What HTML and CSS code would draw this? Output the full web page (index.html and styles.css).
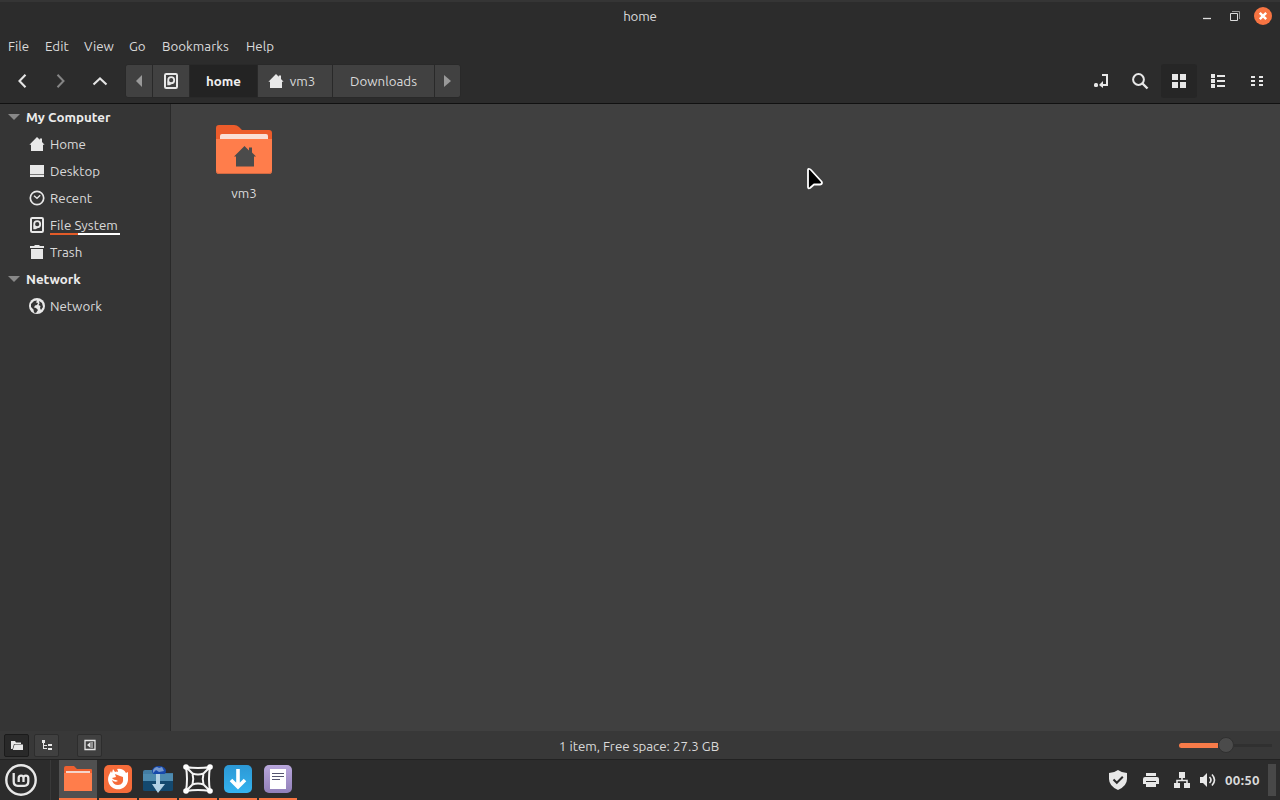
FILE: index.html
```html
<!DOCTYPE html>
<html lang="en">
<head>
<meta charset="utf-8">
<title>home</title>
<link rel="stylesheet" href="styles.css">
</head>
<body>
<svg class="defs" aria-hidden="true">
  <symbol id="house" viewBox="0 0 16 16"><path d="M8 1 L.4 8.7 H2 V15 H14 V8.700 H15.600 L13 6 V2.500 H10.800 V3.800Z"/></symbol>
  <symbol id="disk" viewBox="0 0 16 16"><rect x="2" y="1" width="12" height="14" rx="1.200" fill="none" stroke="currentColor" stroke-width="2"/><circle cx="8.200" cy="7.200" r="3" fill="none" stroke="currentColor" stroke-width="1.800"/><path d="M4.300 8l2.200 2.500 2.500.5-2.500 1.300H4.300Z"/></symbol>
</svg>
<div class="desktop">
  <header class="titlebar">
    <span class="title">home</span>
    <div class="window-buttons">
      <svg width="10" height="16"><path d="M1 10.500H9" stroke="#ddd" stroke-width="1.300"/></svg>
      <svg class="restore" width="12" height="12"><path d="M1.500 3.500h7v7h-7Z" fill="none" stroke="#ddd"/><path d="M3 1.500h7.500v7.500" fill="none" stroke="#999"/></svg>
      <svg width="18" height="18"><circle cx="9" cy="9" r="9" fill="#f77442"/><path d="M5.800 5.800l6.400 6.400m0-6.400L5.800 12.200" stroke="#fff" stroke-width="2.400"/></svg>
    </div>
  </header>
  <nav class="menubar">
    <span class="m-file">File</span><span class="m-edit">Edit</span><span class="m-view">View</span><span class="m-go">Go</span><span class="m-book">Bookmarks</span><span>Help</span>
  </nav>
  <div class="toolbar">
    <div class="nav-buttons">
      <svg width="16" height="16"><path d="M11.500 1.800L5.500 8l6 6.200" fill="none" stroke="#e5e5e5" stroke-width="2.100"/></svg>
      <svg width="16" height="16"><path d="M4.500 1.800L10.500 8l-6 6.200" fill="none" stroke="#858585" stroke-width="2"/></svg>
      <svg width="16" height="16"><path d="M1.500 11.500L8 5.500l6.500 6" fill="none" stroke="#e5e5e5" stroke-width="2.100"/></svg>
    </div>
    <div class="path">
      <span class="crumb c-prev"><svg width="6" height="12"><path d="M6 0v12L0 6Z" fill="#999"/></svg></span>
      <span class="crumb c-disk"><svg class="ico" width="16" height="16"><use href="#disk"/></svg></span>
      <span class="crumb current c-home">home</span>
      <span class="crumb c-vm"><svg class="ico" width="16" height="16"><use href="#house"/></svg><span>vm3</span></span>
      <span class="crumb c-down">Downloads</span>
      <span class="crumb c-next"><svg width="7" height="12"><path d="M0 0v12L7 6Z" fill="#999"/></svg></span>
    </div>
    <div class="view-buttons">
      <span><svg class="ico" width="16" height="16"><rect x="1" y="10" width="4" height="4" rx="1.500"/><path d="M9 2h5v10H8" fill="none" stroke="currentColor" stroke-width="2"/><path d="M10 8v7L6 12Z"/></svg></span>
      <span><svg class="ico" width="18" height="18"><circle cx="7.500" cy="7.500" r="5.400" fill="none" stroke="currentColor" stroke-width="2"/><path d="M11.500 11.500l5 5" stroke="currentColor" stroke-width="2.400"/></svg></span>
      <span class="selected"><svg class="ico" width="14" height="14"><path d="M0 0h6v6H0ZM8 0h6v6H8ZM0 8h6v6H0ZM8 8h6v6H8Z"/></svg></span>
      <span><svg class="ico" width="14" height="14"><path d="M0 0h4v4H0ZM0 5h4v4H0ZM0 10h4v4H0ZM6 1h8v2H6ZM6 6h8v2H6ZM6 11h8v2H6Z"/></svg></span>
      <span><svg class="ico" width="12" height="12"><path d="M0 1h4v2H0ZM8 1h4v2H8ZM0 5h4v2H0ZM8 5h4v2H8ZM0 9h4v2H0ZM8 9h4v2H8Z"/></svg></span>
    </div>
  </div>
  <div class="content">
    <aside class="sidebar">
      <div class="group"><i class="expander"></i><span>My Computer</span></div>
      <div class="place"><svg class="ico" width="16" height="16"><use href="#house"/></svg><span>Home</span></div>
      <div class="place"><svg class="ico" width="16" height="16"><path d="M1 2h14v9H1ZM1 12h14v2H1Z"/><path d="M1 11.500h14" stroke="#777"/></svg><span>Desktop</span></div>
      <div class="place"><svg class="ico" width="16" height="16"><circle cx="8" cy="8" r="6.700" fill="none" stroke="currentColor" stroke-width="1.700"/><path d="M5 5.800l3 2.500 3.200-3" fill="none" stroke="currentColor" stroke-width="1.400"/></svg><span>Recent</span></div>
      <div class="place"><svg class="ico" width="16" height="16"><use href="#disk"/></svg><span class="disk-name">File System<i class="usage"></i></span></div>
      <div class="place"><svg class="ico" width="16" height="16"><path d="M1 2h4l1-1h4l1 1h4v2H1ZM2 5h12v10H2Z"/></svg><span>Trash</span></div>
      <div class="group"><i class="expander"></i><span>Network</span></div>
      <div class="place"><svg class="ico" width="16" height="16"><circle cx="8" cy="8" r="8"/><path fill="#353535" d="M2 6l3-3 3-.5-1 2 2 .5-1 2-2 .5-1 2 2 .5 2 2-2 3-2-.5-.5-3L2 9ZM10 3l3 2 1 4-2 3-1-2 .5-2-2-1 1-1.500Z"/></svg><span>Network</span></div>
    </aside>
    <main class="files">
      <div class="file">
        <svg width="56" height="50"><path d="M0 4Q0 1 3 1H18Q21 1 23 3L26 6H53Q56 6 56 9V25H0Z" fill="#ed5c2b"/><path d="M4 14V12Q4 10 6 10H50Q52 10 52 12V16H4Z" fill="#faded5"/><path d="M0 15H56V47Q56 50 53 50H3Q0 50 0 47Z" fill="#ff7d4b"/><path d="M0 48Q1 50 3 50H53Q55 50 56 48V47Q55 49 53 49H3Q1 49 0 47Z" fill="#d36942"/><path d="M28.500 22L18 32.500h2v10h18v-10h2l-4-4v-5h-3v3Z" fill="#4b4b4b"/></svg>
        <span>vm3</span>
      </div>
      <svg class="pointer" width="20" height="24"><path d="M3.500 2Q2 1.500 2 3V20Q2 22 4 21L8 17.500H14Q17 17 15.500 14.500L5 3Q4.300 2.200 3.500 2Z" fill="#000" stroke="#fff" stroke-width="1.800" stroke-linejoin="round"/></svg>
    </main>
  </div>
  <footer class="statusbar">
    <div class="pane-buttons">
      <span class="pressed"><svg class="ico" width="12" height="12"><path d="M0 2h4l1 1.500h5V5H3L1.500 10H0ZM3.500 5.500H12V11H1.800Z"/></svg></span>
      <span><svg class="ico" width="12" height="12"><path d="M1 1h3v3H3v2h3v1H3v2h3v1H2V4H1ZM7 5h4v2H7ZM7 9h4v2H7Z"/></svg></span>
      <span class="pane-toggle"><svg width="12" height="12"><path d="M1 1.500h10v9H1Z" fill="none" stroke="#e5e5e5" stroke-width="1.300"/><path d="M6.500 3v6L3 6ZM7.500 3h1v6h-1Z" fill="#e5e5e5"/></svg></span>
    </div>
    <span class="summary">1 item, Free space: 27.3 GB</span>
    <div class="zoom"><i class="level"></i><i class="knob"></i><i class="rest"></i></div>
  </footer>
  <div class="taskbar">
    <div class="start"><svg width="34" height="34"><circle cx="17" cy="17" r="14.700" fill="none" stroke="#e8e8e8" stroke-width="2.400"/><path d="M9.700 10V18.500Q9.700 22.800 13.700 22.800H20.300Q24.300 22.800 24.300 18.500V15A2.400 2.400 0 0 0 19.500 15V19M19.500 15A2.400 2.400 0 0 0 14.700 15V19" fill="none" stroke="#e8e8e8" stroke-width="2.300"/></svg></div>
    <div class="tasks">
      <span class="task active"><svg width="28" height="28"><path d="M0 3Q0 1 2 1H10L13 4H27Q28 4 28 5V9H0Z" fill="#ed6030"/><path d="M2 6H26V10H2Z" fill="#f5d5cb"/><path d="M0 8H28V26H0Z" fill="#ff7d4b"/></svg></span>
      <span class="task"><svg width="28" height="28"><rect width="28" height="28" rx="5" fill="#f66c3a"/><path d="M9 4l2 3q2-1 3 0 0-2-1-3 6-1 9 4l2-1v8A10 10 0 1 1 5 10L7 6l1 2Z" fill="#fff"/><path d="M8 13l4-1-1-3 5 2 3 1q1 8-5 8-5 0-6-5 3 3 6 1l-2-1q-2 0-3-1Z" fill="#f66c3a"/></svg></span>
      <span class="task"><svg width="30" height="28"><path d="M0 7q0-2 2-2h7l4 3h17v8H0Z" fill="#437da4"/><ellipse cx="16" cy="6" rx="7" ry="5" fill="#1749ac"/><path d="M10 5q3-5 6-2l3-1 2 4-5 1-3-2-3 3Z" fill="#7598ce"/><path d="M0 9h30v8H0Z" fill="#4e8bb0"/><path d="M0 16h30v9q0 1-2 1H2q-2 0-2-1Z" fill="#14496f"/><path d="M13 9h4v10h5l-7 9-6-9h4Z" fill="#b2d1e5"/></svg></span>
      <span class="task"><svg width="30" height="30" fill="none" stroke="#f4f4f4" stroke-width="2"><path d="M3 3Q15 5 27 3Q25 15 27 27Q15 25 3 27Q5 15 3 3ZM9.500 9.500Q15 11.500 20.500 9.500Q19 15 20.500 20.500Q15 18.500 9.500 20.500Q11 15 9.500 9.500ZM3 3l7 7M27 3l-7 7M3 27l7-7M27 27l-7-7"/><g fill="#fff" stroke="none"><circle cx="3" cy="3" r="2.800"/><circle cx="27" cy="3" r="2.800"/><circle cx="3" cy="27" r="2.800"/><circle cx="27" cy="27" r="2.800"/></g></svg></span>
      <span class="task"><svg width="28" height="28"><defs><linearGradient id="blue" x2="0" y2="1"><stop stop-color="#2c98d5"/><stop offset="1" stop-color="#34b3ef"/></linearGradient></defs><rect width="28" height="28" rx="5" fill="url(#blue)"/><path d="M14 4v18M7 15l7 7 7-7" fill="none" stroke="#fff" stroke-width="3.600"/></svg></span>
      <span class="task"><svg width="28" height="28"><defs><linearGradient id="violet" x2="0" y2="1"><stop stop-color="#b9a7dc"/><stop offset="1" stop-color="#9180b9"/></linearGradient></defs><rect width="28" height="28" rx="5" fill="url(#violet)"/><path d="M6 4h16v20H6Z" fill="#fff"/><path d="M8 8.500h12M8 11.500h12M8 14.500h8" stroke="#555570" stroke-width="1"/></svg></span>
    </div>
    <div class="tray">
      <svg class="ico" width="20" height="22"><path d="M10 1Q14 4 19 4V10Q19 17 10 21Q1 17 1 10V4Q6 4 10 1Z"/><path d="M5.500 10.500l3.300 3.300 6-6" fill="none" stroke="#2c2c2c" stroke-width="2"/></svg>
      <svg class="ico" width="16" height="16"><path d="M3 1h10v3H3ZM2 5h12q2 0 2 2v5h-3v3H3v-3H0V7Q0 5 2 5Z"/><path d="M3 9.500h10" stroke="#2c2c2c"/></svg>
      <svg class="ico" width="16" height="16"><path d="M5 0h6v6H5ZM0 11h6v5H0ZM10 11h6v5h-6Z"/><path d="M8 5v3.500M3 12V8.500h10V12" fill="none" stroke="currentColor" stroke-width="1.600"/></svg>
      <svg class="ico" width="18" height="16"><path d="M1 5h3l4-4v14l-4-4H1Z"/><path d="M10.500 5q3 3 0 6M13 2.500q5 5.500 0 11" fill="none" stroke="currentColor" stroke-width="1.600"/></svg>
      <span class="clock">00:50</span><i class="corner"></i>
    </div>
  </div>
</div>
</body>
</html>
```
FILE: styles.css
```css
* { box-sizing: border-box; }
body { margin: 0; background: #2c2c2c; font: 13.333px/22px Ubuntu, "Noto Sans", sans-serif; color: #dadada; }
svg { display: block; flex: none; }
i { display: block; }
span { white-space: nowrap; }
.defs { display: none; }
.ico { fill: currentColor; color: #e8e8e8; }
.desktop { width: 1280px; height: 800px; display: flex; flex-direction: column; overflow: hidden; }
.titlebar { height: 32px; flex: none; display: grid; grid-template-columns: 1fr auto 1fr; align-items: center; border-top: 2px solid #353535; padding: 0 8px 2px 0; }
.title { grid-column: 2; padding: 2px 0 0 8px; letter-spacing: -.15px; }
.window-buttons { display: flex; justify-content: flex-end; align-items: center; gap: 13px; }
.restore { margin-left: 4px; }
.menubar { height: 28px; flex: none; display: flex; align-items: center; padding: 2px 0 0 8px; }
.m-file { width: 37px; }
.m-edit { width: 39px; }
.m-view { width: 45px; }
.m-go { width: 33px; }
.m-book { width: 84px; }
.toolbar { height: 44px; flex: none; display: flex; align-items: center; border-bottom: 1px solid #111; padding: 0 5px 2px 14px; }
.nav-buttons { display: flex; gap: 23px; width: 111px; }
.path { display: flex; height: 34px; border: 1px solid #292929; border-radius: 3px; background: #414141; overflow: hidden; }
.crumb { display: flex; align-items: center; justify-content: center; border-right: 1px solid #292929; }
.crumb:last-child { border: 0; }
.c-prev { width: 27px; }
.c-disk { width: 37px; }
.c-home { width: 68px; }
.c-vm { width: 75px; gap: 6px; padding-right: 7px; }
.c-down { width: 102px; }
.c-next { width: 25px; }
.c-vm span { padding-top: 2px; }
.c-home, .c-down { padding-top: 2px; }
.current { background: #232323; color: #f0f0f0; font-weight: 700; }
.view-buttons { display: flex; margin-left: auto; gap: 3px; }
.view-buttons span { width: 36px; height: 34px; display: grid; place-items: center; border-radius: 3px; }
.view-buttons .selected { background: #262626; }
.content { height: 627px; flex: none; display: flex; background: #404040; }
.sidebar { width: 171px; background: #353535; border-right: 1px solid #292929; }
.group, .place { height: 27px; display: flex; align-items: center; padding-bottom: 1px; }
.group { padding-left: 8px; gap: 6px; font-weight: 700; color: #ececec; }
.group span, .place span { padding-top: 2px; }
.place { padding-left: 29px; gap: 5px; }
.expander { border: 6px solid transparent; border-top-color: #888; border-bottom: 0; }
.disk-name { position: relative; letter-spacing: .06px; }
.usage { position: absolute; left: 0; bottom: 2px; width: 70px; height: 2px; background: linear-gradient(to right, #e35b28 28px, #fff 28px); }
.files { flex: 1; position: relative; padding: 20px 0 0 45px; }
.file { width: 56px; display: flex; flex-direction: column; align-items: center; gap: 9px; }
.pointer { position: absolute; left: 635px; top: 63px; }
.statusbar { height: 29px; flex: none; display: grid; grid-template-columns: 1fr auto 1fr; align-items: center; background: #383838; border-bottom: 1px solid #222; padding: 0 8px 0 4px; }
.pane-buttons { display: flex; gap: 5px; }
.pane-buttons span { width: 25px; height: 23px; border: 1px solid #2d2d2d; background: #404040; display: grid; place-items: center; border-radius: 2px; }
.pane-buttons .pressed { background: #292929; border-color: #1b1b1b; }
.pane-buttons .pane-toggle { margin-left: 13px; }
.summary { padding: 4px 0 0 2px; }
.zoom { display: flex; align-items: center; justify-content: flex-end; }
.level { width: 39px; height: 5px; background: #f77b49; border-radius: 3px 0 0 3px; }
.knob { width: 16px; height: 16px; border-radius: 50%; background: #4b4b4b; border: 1px solid #303030; }
.rest { width: 38px; height: 3px; background: #303030; }
.taskbar { height: 40px; flex: none; display: flex; background: #2c2c2c; }
.start { width: 51px; border-right: 1px solid #393939; padding: 3px 0 0 4px; }
.tasks { display: flex; padding-left: 8px; gap: 2px; }
.task { width: 38px; display: grid; place-items: center; border-bottom: 2px solid #f77442; }
.active { background: #505050; }
.tray { display: flex; align-items: center; margin-left: auto; gap: 15px; padding-right: 4px; }
.tray .ico:nth-child(4) { margin-left: -6px; }
.clock { width: 36px; margin-left: -7px; padding-top: 2px; font-weight: 700; letter-spacing: .3px; }
.corner { width: 8px; height: 32px; background: #484848; margin-left: -8px; }
```
